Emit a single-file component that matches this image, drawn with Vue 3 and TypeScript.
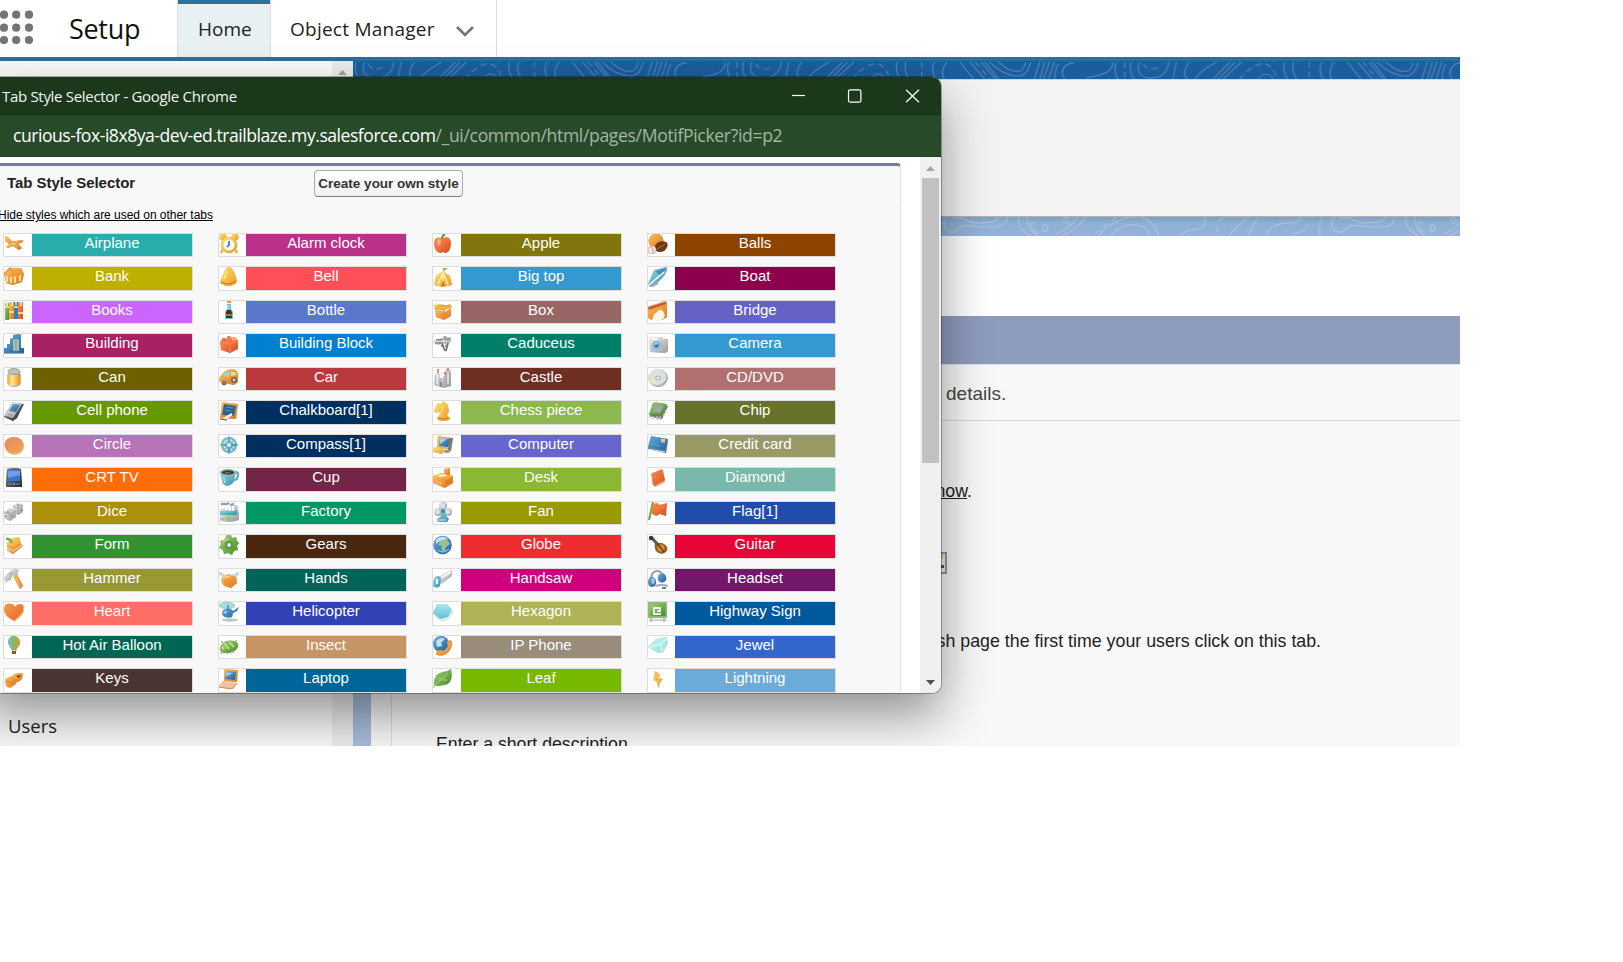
<script setup lang="ts">
type Shape = [d: string, fill: string, stroke?: string, width?: number]
interface Style { name: string; color: string; icon: Shape[] }

const e = (x: number, y: number, rx: number, ry = rx): string =>
  `M${x - rx} ${y}a${rx} ${ry} 0 1 0 ${rx * 2} 0a${rx} ${ry} 0 1 0 ${-rx * 2} 0z`
const r = (x: number, y: number, w: number, h: number): string => `M${x} ${y}h${w}v${h}h${-w}z`

const O = 'url(#g-orange)'
const Y = 'url(#g-yellow)'
const B = 'url(#g-blue)'
const A = 'url(#g-aqua)'
const G = 'url(#g-grey)'
const N = 'url(#g-green)'
const R = 'url(#g-red)'
const K = 'url(#g-dark)'
const none = 'none'

const styles: Style[] = [
  { name: 'Airplane', color: '#2aacac', icon: [['M1 2L4 3 8 7 12 7 17 6Q20 6 19 8L14 10 18 14 15 16 9 12 4 14 2 13 5 10 1 7z', O], ['M3 12L14 8M8 9L14 13', none, '#f9cb85', 1]] },
  { name: 'Alarm clock', color: '#b93189', icon: [[e(4, 3, 3.5), Y], [e(16, 3, 3.5), Y], ['M4 15L2 19M16 15L18 19', none, '#e9b04c', 2], [e(10, 11, 8.3), Y], [e(10, 11, 5.6), '#f5f7f3'], ['M10 7V11L8 13', none, '#2a62a5', 1.5]] },
  { name: 'Apple', color: '#82750e', icon: [['M10 4Q18 1 18 10Q17 19 12 19L10 18 8 19Q2 19 1 10Q1 2 8 4z', R], ['M9 5Q9 1 12 0', none, '#65a33a', 2], [e(6, 8, 2, 3), '#ffb083']] },
  { name: 'Balls', color: '#8d4400', icon: [[e(8, 7, 7.5), O], ['M6 14Q9 5 18 8Q22 11 16 17Q9 20 6 14z', '#6d390f'], ['M9 15L17 10', none, '#b87537', 1], [e(4, 16, 4), '#f5ece6', '#c7aaa0', .6], ['M3 13Q6 15 5 19', none, '#dd543c', .7]] },
  { name: 'Bank', color: '#bfaf00', icon: [['M0 7L6 1 17 1 20 7 18 15 9 18 2 16z', O], ['M3 9V15M7 10V16M11 9V16M16 7V14', none, '#ffe29c', 2], ['M0 7L6 1L10 9L20 7', none, '#e39a45', 1.5]] },
  { name: 'Bell', color: '#ff505a', icon: [['M10 0Q14 1 16 7L18 14Q17 19 8 19Q1 18 1 14L5 6Q6 1 10 0z', Y], ['M2 15Q9 19 17 14', none, '#d4811f', 1.2], ['M8 4L5 12', none, '#ffe88b', 2]] },
  { name: 'Big top', color: '#3399cf', icon: [['M10 4L17 9 19 18 10 20 1 18 3 9z', Y], ['M10 4V20M10 5L5 18M10 5L15 18', none, '#fff0a0', 1.5], ['M10 5V1H15L12 3z', '#c99768'], ['M8 20L10 13L12 19z', '#bf7c2b']] },
  { name: 'Boat', color: '#8c004c', icon: [['M0 17L6 3 19 0Q20 7 8 17L2 20z', A], ['M7 4L18 1 13 9z', B], ['M1 18L16 5', none, '#fff', 1.5], ['M2 20L10 16', none, '#a4abb0', 2]] },
  { name: 'Books', color: '#ca65ff', icon: [[r(1, 2, 4, 17), N], [r(5, 1, 5, 17), O], [r(10, 1, 4, 17), '#327cca'], [r(14, 1, 5, 17), R], ['M1 6H5M5 11H10M10 6H14M14 12H19', none, '#ffdc61', 2], ['M3 0V5M8 0V5M12 0V4M17 0V5', none, '#fff', 1.3]] },
  { name: 'Bottle', color: '#5a78cb', icon: [[r(8, 0, 4, 2), O], ['M8 3H12V8L14 11V18H6V11L8 8z', '#72c6ca'], ['M8 9H12L13 12V17H7V12z', '#49311d'], [r(7, 13, 6, 2), '#8a8048'], ['M9 4V8', none, '#d6f2ee', 1]] },
  { name: 'Box', color: '#996666', icon: [['M2 8L12 11 18 7V15L11 19 3 16z', O], ['M2 7L0 4 9 3 11 5 17 3 19 6 12 9z', Y], ['M2 7L11 9V18M4 5H16', none, '#e08a25', 1]] },
  { name: 'Bridge', color: '#6463c5', icon: [['M0 7L19 1V16L14 19Q14 7 6 13L4 19 0 17z', O], ['M0 6L18 0V3L1 9z', '#c75b31'], ['M6 18Q9 7 14 9Q19 15 15 18L9 20z', '#fff8e8'], ['M2 5L18 0', none, '#efc6aa', 1]] },
  { name: 'Building', color: '#a82162', icon: [['M0 14H3V10H6V5L9 4V1L15 0 17 1V14H20V19H0z', B], ['M9 5H15V17H9z', '#87abc0'], ['M10 6V16M14 6V16', none, '#f0ce64', 1], ['M0 19H20', none, '#477c98', 1]] },
  { name: 'Building Block', color: '#0080ce', icon: [['M1 7L12 4 19 6V15L11 19 2 16z', R], [e(5, 6, 2.5, 2), '#f06b43'], [e(10, 4, 2.5, 2), '#f47d4e'], [e(15, 5, 2.5, 2), '#f9a26c'], ['M2 8L11 10V18M11 10L19 7', none, '#fb8a68', .8]] },
  { name: 'Caduceus', color: '#007f68', icon: [['M0 7Q7 4 18 3Q19 8 14 11L13 17 10 14 9 10Q3 12 1 9z', G], ['M3 6L17 5M2 9H15M8 12H14', none, '#606061', 1.2], ['M10 5L13 18M14 8L10 14', none, '#f7f7f7', 1], ['M9 10L12 17M15 9L13 17', none, '#717171', 1.5], [e(12, 4, 2), '#a6a6a6']] },
  { name: 'Camera', color: '#3399cf', icon: [['M3 3H14L15 5H20V17L17 19 2 18 1 7z', G], [e(9, 12, 5.5), '#b5bbc2'], [e(8.5, 11.5, 3.7), '#76b9e4'], [e(8.5, 11.5, 1.8), '#2666a9'], [e(8, 10, 1), '#cceeff'], ['M4 5H10', none, '#fff', 1.5]] },
  { name: 'Can', color: '#6d6000', icon: [[r(4, 2, 12, 5), G], ['M4 15Q10 19 16 15V17Q10 21 4 17z', G], ['M3.5 6Q10 9 16.500 6V16Q10 19 3.500 16z', 'url(#g-can)'], [e(10, 3.5, 6, 3), '#bfc0c0', '#8b8b8b', .6]] },
  { name: 'Car', color: '#b9393c', icon: [['M1 9L5 4Q10 0 17 2L19 6V14L15 17 4 15 0 13z', O], ['M4 8L7 4L11 4L10 9z', '#9dd2df'], ['M12 4H16L18 7 12 8z', '#e6dca9'], [e(5, 15, 2.5), '#8c7862'], [e(15, 12, 3), '#686663'], [e(15, 12, 1.4), '#ccc']] },
  { name: 'Castle', color: '#6d2f22', icon: [['M2 5H7V10H10V8H12V3L14 0 18 3V18L11 20 1 17z', G], ['M3 7V17M7 10V19M13 5V18M17 5V17', none, '#9d9d9d', .8], ['M5 1V5M15 0V3M12 4V7', none, '#d36c57', 1.3], ['M8 14V19', none, '#777', 1.3], ['M4 7V16M15 6V16', none, '#fff', 1]] },
  { name: 'CD/DVD', color: '#b0706f', icon: [[e(10, 10, 9.8, 9), G], [e(9.5, 9.5, 8.5, 7.5), '#dfe1df'], ['M10 10L2 6 1 9z', '#dbe5ab'], ['M10 10L2 13 4 16z', '#eeedb9'], ['M10 10L18 7 18 12z', '#cde6df'], [e(10, 10, 3, 2.5), '#b6c2b5'], [e(10, 10, 1.3, 1), '#fff']] },
  { name: 'Cell phone', color: '#669900', icon: [['M8 2L20 3 13 17 9 20 0 16z', K], ['M8 1L18 3 9 17 1 15z', G], ['M9 3L16 4 12 11 5 10z', B], ['M4 13L9 15M3 15L8 17', none, '#8a9198', 1]] },
  { name: 'Chalkboard[1]', color: '#003060', icon: [['M3 1L19 3 17 18 1 17z', O], ['M5 3L17 5 15 15 3 14z', '#2e6292'], ['M7 6L14 7M6 9L12 10', none, '#7ba4bf', .7], ['M5 18L13 13', none, '#f9f7f1', 2.2], ['M1 18L8 19', none, '#774a2a', 1]] },
  { name: 'Chess piece', color: '#8db84f', icon: [['M5 2L8 3 10 0 15 4 16 11 14 14 17 17Q17 20 10 20Q4 20 4 17L8 13 7 11 2 12 1 9z', Y], ['M7 4L10 8L7 14', none, '#ffce6b', 2], ['M5 17Q9 19 15 17', none, '#c9771f', 1]] },
  { name: 'Chip', color: '#69722a', icon: [['M5 2L20 5 14 18 1 15z', '#6c776a'], ['M6 1L19 3 14 14 1 13z', N], ['M8 4L15 5 12 12 5 11z', '#9fa69f'], ['M2 14V17M5 15V18M9 15V19M12 15V19M15 13L16 15M17 9L18 11', none, '#d1cabe', 1.2]] },
  { name: 'Circle', color: '#b772b8', icon: [[e(10.5, 11.5, 9.3, 8.2), '#e9b763'], [e(10, 9.8, 9.5, 7.9), 'url(#g-disc)']] },
  { name: 'Compass[1]', color: '#003060', icon: [[e(10, 10, 7), none, '#76bac2', 2], ['M10 0L12 7 17 3 13 8 20 10 13 12 17 17 12 13 10 20 8 13 3 17 7 12 0 10 7 8 3 3 8 7z', A], ['M10 2V10H18M10 10V18M10 10H2', none, '#4d8fa8', .8], [e(10, 10, 2), '#d7f2ed']] },
  { name: 'Computer', color: '#6666cc', icon: [['M5 1L19 3 17 15 4 13z', '#efb45a'], ['M16 3L20 3 18 16 15 15z', '#80796c'], ['M7 3L17 4 15 12 6 11z', B], ['M13 15L18 16 15 18 10 17z', '#8b9189'], ['M1 12L12 15 9 19 0 17z', Y], ['M7 3L14 4 7 9z', '#9fd3ee']] },
  { name: 'Credit card', color: '#999966', icon: [['M3 3L20 6 18 18 0 14z', '#5d7c98'], ['M3 1L20 4 17 15 0 12z', B], [r(13, 4, 4, 3.5), '#e9c969'], ['M3 9L12 11', none, '#73add3', .8], ['M1 14L17 17', none, '#c8dae6', 1]] },
  { name: 'CRT TV', color: '#ff6d08', icon: [['M3 1Q10-1 17 1L18 15V19H2V15z', K], [r(4, 2, 12, 11), '#3a76d0'], ['M4 3H16V7L4 10z', '#6f9fe5'], ['M4 16H8M12 16H16', none, '#888', 1], [e(10, 16, 1), '#7ab4db']] },
  { name: 'Cup', color: '#722546', icon: [['M15 5Q21 2 18 11L13 13', none, '#58afc0', 2], ['M1 4Q8 7 17 4L14 15Q9 20 4 16z', A], [e(9, 4.5, 8, 3.5), '#78c4d1'], [e(9, 4.5, 6.2, 2.2), '#4f351e'], ['M6 5L11 5', none, '#b99a6b', .8], ['M4.500 9L6 15', none, '#a9dce4', 1.5]] },
  { name: 'Desk', color: '#8ab833', icon: [['M0 8L9 5 20 8V15L12 20 0 15z', O], ['M0 8L10 11 20 8L10 5z', Y], ['M2 12L9 14V17L2 15z', '#f5b061'], ['M11 7V1L17 0V7z', O], ['M12 13L19 10V14L12 18z', '#dc7e2c'], ['M6 8L13 7', none, '#fff', 1.5]] },
  { name: 'Diamond', color: '#79b8ab', icon: [['M4 5L15 2 17 14 7 19 4 16z', '#e8b068'], ['M3 6L14 1 17 12 6 18z', R]] },
  { name: 'Dice', color: '#ab910b', icon: [['M9 4L14 1 19 3V10L14 13 9 10z', G], ['M0 10L6 6 12 9V15L6 19 0 16z', G], ['M9 4L14 6L19 3M0 10L6 12L12 9M6 12V18M14 6V13', none, '#a69d8d', .8], [e(4, 10, .8), '#6a5d4d'], [e(8, 14, .8), '#6a5d4d'], [e(14, 3, .8), '#6a5d4d'], [e(17, 8, .8), '#6a5d4d'], [e(2, 14, .7), '#6a5d4d']] },
  { name: 'Factory', color: '#009966', icon: [['M1 8L6 6V9L11 7V3H18L20 12V18L12 20 1 19z', G], ['M1 9L18 8V13H1z', A], [r(8, 14, 3, 5), '#9fc54b'], ['M2 2H8L10 1M11 3L15 2', none, '#969b9d', 2], ['M11 4V9M14 4V9', none, '#fff', 2], ['M1 17H7M13 17H20', none, '#9ba9ab', 1]] },
  { name: 'Fan', color: '#999900', icon: [[e(10, 4, 4), G], [e(5, 10, 4), G], [e(15, 10, 4), G], [e(10, 4, 2.3), '#d3e6e9'], [e(5, 10, 2), '#d8e6e7'], [e(15, 10, 2), '#d8e6e7'], ['M8 7H12L13 14 16 17 14 20H5L4 17 8 14z', A], [e(10, 9, 2), '#4a8aa5'], ['M6 18H13', none, '#c9e9f1', 1]] },
  { name: 'Flag[1]', color: '#204da9', icon: [['M5 0L1 18', none, '#6fad4b', 2], ['M5 2L9 1 12 3 19 1 18 14 12 12 8 14 3 11z', R], ['M8 3L11 6L16 5', none, '#f47a3b', 1.5]] },
  { name: 'Form', color: '#319431', icon: [['M3 9L13 4 19 11 9 19 3 15z', O], ['M5 4L15 2 17 8 9 12 3 9z', Y], ['M3 13L9 16L18 10', none, '#ffe9bd', 1], ['M2 4Q6 3 8 8', none, '#72a850', 2]] },
  { name: 'Gears', color: '#4a2810', icon: [['M8 0H12L13 3 17 2 18 6 20 8 18 11 19 15 15 16 13 20 9 18 5 19 4 15 0 13 2 9 1 6 5 5z', N], [e(10, 10, 4), '#5d924a'], [e(10, 10, 2), '#e2eddc'], ['M4 8Q6 4 10 4', none, '#aed387', 1.3]] },
  { name: 'Globe', color: '#ef2d30', icon: [[e(9.5, 10, 9.2), B], ['M8 4L14 4 17 9 13 12 11 17 8 14 9 11 5 10z', '#98c28b'], ['M3 5Q9-1 15 4Q8 4 3 9z', '#c5e6f5'], ['M5 15Q10 19 16 14', none, '#84baf0', 1.5]] },
  { name: 'Guitar', color: '#e70437', icon: [['M4 3L10 10', none, '#615d55', 3], [e(3, 3, 2.2), '#363636'], ['M7 9L11 8 14 8Q22 12 18 17Q13 21 8 16Q6 12 7 9z', '#9e5d16'], [e(13, 13, 3.500), '#cf963b'], ['M9 8L16 17', none, '#4f4028', 1.3]] },
  { name: 'Hammer', color: '#999933', icon: [['M9 7L13 5 19 17 16 20z', O], ['M4 4L10 0 15 1 12 7 8 6 6 11 2 13 0 9z', G], ['M5 5L8 4 6 11', none, '#a9b3b6', 1.2], ['M12 9L17 18', none, '#ffc67c', 1]] },
  { name: 'Hands', color: '#006558', icon: [['M0 4L5 7 3 12M20 4L15 7 17 11', none, '#b9dfe1', 3], ['M4 8L9 5 17 8 18 14 12 19 5 17 2 12z', O], ['M5 12L11 16M8 10L14 15', none, '#cd762c', .8], ['M4 9L11 7', none, '#ffd188', 1.5]] },
  { name: 'Handsaw', color: '#ce007b', icon: [['M6 8L19 1 19 7 8 15z', G], ['M8 9L18 3', none, '#f7faf9', 2], ['M1 9Q6 5 8 9L7 17Q3 20 0 17z', A], ['M4 10L4 15', none, '#eefbfa', 2]] },
  { name: 'Headset', color: '#73176b', icon: [['M3 12Q3 1 10 2Q16 4 16 11', none, '#9ca7ad', 2], [e(4, 13, 4, 5), B], [e(14, 9, 4.3, 4.5), B], [e(5, 12, 1.8, 3), '#a3c7da'], ['M7 17Q14 15 20 17', none, '#a4b2bc', 1.8], ['M14 19H18', none, '#326d9f', 1.5]] },
  { name: 'Heart', color: '#ff6e66', icon: [['M10 19Q0 14 0 7Q1 0 8 2Q10 2 11 5Q14 0 19 3Q22 9 10 19z', 'url(#g-heart)'], ['M10 19Q18 13 20 8', none, '#e2b35b', 1.3]] },
  { name: 'Helicopter', color: '#3142b5', icon: [['M4 8L11 6 14 9 20 5 18 9 14 11 13 15Q5 17 3 12z', B], [e(8, 3.5, 7.5, 3), '#a5dfe0', '#8accd2', .8], ['M9 3V8', none, '#3b6382', 1], ['M4 10L8 9 7 12z', '#afdeef'], [e(11, 18, 8, 1.5), '#bec5c7']] },
  { name: 'Hexagon', color: '#b0b257', icon: [['M5 3L15 3 20 11 15 18 8 19 0 13z', '#e5ede8'], ['M4 2L14 2 19 8 15 15 7 17 0 11z', 'url(#g-hex)']] },
  { name: 'Highway Sign', color: '#00599c', icon: [['M3 16V20M16 16V20', none, '#b8bfb8', 2], [r(0, 0, 19, 16), '#8fba7c'], [r(1.5, 1.5, 16, 12.5), N], ['M13 12H6V6H12V9H9', none, '#eff7e9', 1.8], ['M1 18H19', none, '#c4c4c4', 1]] },
  { name: 'Hot Air Balloon', color: '#006654', icon: [['M4 6Q5 0 10 0Q17 1 16 8L12 14H8z', O], ['M7 1Q10-1 13 1L14 9 11 14H8L6 9z', '#8cb85c'], ['M9 0Q6 6 9 13H7L4 7Q4 1 9 0z', '#79bac4'], ['M8 14L9 17M12 14L11 17', none, '#a06438', .8], [r(8, 15, 4, 3), '#835733']] },
  { name: 'Insect', color: '#c69566', icon: [['M1 11Q5 3 15 5Q20 6 19 11Q16 17 7 17Q0 17 1 11z', N], ['M3 16L2 18M8 17L9 18M13 15L15 17M4 7L2 5M16 6L18 4', none, '#92ac72', 1], ['M5 7L10 13M10 6L15 11', none, '#bfdc83', 2], [e(4, 12, 1.7), '#c4dc7a']] },
  { name: 'IP Phone', color: '#998c7b', icon: [[e(8, 8, 8), B], ['M3 5Q8 0 12 3L8 7 9 10 4 11z', '#c4e1e7'], ['M14 6Q16 3 19 5Q20 13 13 18Q9 21 4 19Q2 18 4 15L8 14 11 15 15 11z', O], ['M7 17Q15 15 17 7', none, '#f6a04b', 1.5]] },
  { name: 'Jewel', color: '#3366cc', icon: [['M0 11L8 3 18 1 20 7 15 16 10 17z', 'url(#g-jewel)'], ['M2 11L13 8L18 3M13 8L14 15', none, '#dcfaf5', 1.3]] },
  { name: 'Keys', color: '#4a3431', icon: [['M8 7Q10 4 18 4Q20 7 17 11Q13 15 9 12z', O], ['M12 7L17 6 15 9z', '#6c4b25'], ['M1 10L8 7 13 10 12 15 6 19 2 17z', O], ['M2 12L7 14L12 11', none, '#c98525', 1]] },
  { name: 'Laptop', color: '#006699', icon: [['M5 0L19 1 18 13 5 12z', O], ['M7 2L17 3 16 11 6 10z', B], ['M4 12L17 14 13 20 0 17z', '#f0c39d'], ['M0 18L13 20L18 14', none, '#df8646', 1], ['M7 3L14 4L7 8z', '#96c6e6']] },
  { name: 'Leaf', color: '#77b800', icon: [['M1 15Q0 5 10 3Q14 3 18 0Q21 15 11 16Q6 17 2 17z', N], ['M0 19Q4 14 15 4M7 12L7 8M9 11L14 11', none, '#b5d67a', 1]] },
  { name: 'Lightning', color: '#6aabd9', icon: [['M7 2L12 5 11 9 15 10 12 14 10 19 9 13 5 11z', Y], ['M8 3L8 10L12 12', none, '#f3ab40', 1]] }
]

const dots: string[] = [14.7, 27.7, 40].flatMap(y => [4, 16.2, 29].map(x => e(x, y, 4.1)))

const contourDark = {
  solid: 'M40 0Q28 25 45 52M75 0Q55 30 68 52M112 0L150 52M140 0L182 52M172 0L212 52M182 0L220 52M195 0Q235 42 275 42Q300 42 310 0M220 0Q250 30 275 28Q290 28 296 0M335 0L320 52M350 0L335 52M363 0L345 52M376 0L360 52M432 2Q400 5 398 35L405 52M388 5Q375 30 378 52M540 0Q540 30 500 40Q465 45 465 52M550 0Q540 30 555 52M590 0Q585 30 600 52M615 0Q600 40 640 48Q690 52 697 0M718 0L708 52M755 0Q730 35 750 52M830 0Q780 30 770 52M868 0L820 52M882 0L835 52M900 0L848 52M1020 0Q1015 30 1030 52M1045 0Q1040 30 1055 52M945 52Q970 20 990 52',
  dashed: 'M155 0L195 50M573 0V52M625 5Q640 35 675 10M895 52Q930 5 965 5Q990 10 1000 52M5 0V52'
}
const contourLight = {
  solid: 'M75 0C55 30 80 50 100 44C115 25 120 22 160 28C220 35 240 30 245 0M90 5C130-5 130 22 170 18C205 15 215 15 218 0M275 0Q275 40 310 55M300 0Q300 40 330 55M325 15L310 18Q315 45 330 45M343 33a7 10 0 1 0 14 0a7 10 0 1 0-14 0M402 10a7 9 0 1 0 14 0a7 9 0 1 0-14 0M465 0Q430 45 400 55M440 0Q420 35 380 52M535 55Q570 15 610 25Q645 35 640 55M500 55C550 0 590-5 620 0Q660 15 668 55M730 55Q750 35 785 35Q800 25 798 0M920 0Q870 45 865 55M945 0Q930 35 920 55M970 55Q985 15 1040 18Q1065 15 1065 0M1040 50Q1080 48 1085 20M40 0Q30 30 35 55',
  dashed: 'M490 50L550 0M850 0Q820 30 840 55'
}
</script>

<template>
  <svg class="defs" width="0" height="0" aria-hidden="true">
    <defs>
      <linearGradient id="g-orange" x2="1" y2="1"><stop stop-color="#ffc15a" /><stop offset="1" stop-color="#df7420" /></linearGradient>
      <linearGradient id="g-yellow" x2="1" y2="1"><stop stop-color="#ffe272" /><stop offset="1" stop-color="#ea9b27" /></linearGradient>
      <linearGradient id="g-can"><stop stop-color="#f0a52c" /><stop offset=".35" stop-color="#ffec8c" /><stop offset="1" stop-color="#e48a1c" /></linearGradient>
      <linearGradient id="g-heart" x2="1" y2="1"><stop stop-color="#f4a04c" /><stop offset="1" stop-color="#ec5f1e" /></linearGradient>
      <linearGradient id="g-blue" x2="1" y2="1"><stop stop-color="#68afdb" /><stop offset="1" stop-color="#1f5f9f" /></linearGradient>
      <linearGradient id="g-aqua" x2="1" y2="1"><stop stop-color="#9bdae3" /><stop offset="1" stop-color="#348fae" /></linearGradient>
      <linearGradient id="g-grey" x2="1" y2="1"><stop stop-color="#f3f3f3" /><stop offset="1" stop-color="#96999b" /></linearGradient>
      <linearGradient id="g-green" x2="1" y2="1"><stop stop-color="#a5cf70" /><stop offset="1" stop-color="#438e2b" /></linearGradient>
      <linearGradient id="g-red" x2="1" y2="1"><stop stop-color="#ff9350" /><stop offset="1" stop-color="#d84c22" /></linearGradient>
      <linearGradient id="g-dark" x2="1" y2="1"><stop stop-color="#7a858e" /><stop offset="1" stop-color="#282d32" /></linearGradient>
      <linearGradient id="g-disc" x2="1" y2="1"><stop stop-color="#e68b58" /><stop offset="1" stop-color="#f2a05c" /></linearGradient>
      <linearGradient id="g-hex" x2="0" y2="1"><stop stop-color="#a7eaea" /><stop offset="1" stop-color="#5cbfd2" /></linearGradient>
      <linearGradient id="g-jewel" x2="1" y2="1"><stop stop-color="#c6f4ea" /><stop offset="1" stop-color="#93e4dc" /></linearGradient>
      <pattern id="contour-dark" width="1085" height="54" patternUnits="userSpaceOnUse" patternTransform="translate(179.5 1) scale(.35714 .33333)">
        <path :d="contourDark.solid" /><path :d="contourDark.dashed" stroke-dasharray="18 12" />
      </pattern>
      <pattern id="contour-light" width="1085" height="60" patternUnits="userSpaceOnUse" patternTransform="translate(179.5 0) scale(.35714 .33333)">
        <path :d="contourLight.solid" /><path :d="contourLight.dashed" stroke-dasharray="18 12" />
      </pattern>
    </defs>
  </svg>

  <div class="screen">
    <header class="top">
      <svg class="waffle" width="34" height="57"><path v-for="d in dots" :key="d" :d="d" /></svg>
      <div class="app-name"><span>Setup</span></div>
      <nav class="tabs">
        <a class="tab active"><span>Home</span></a>
        <a class="tab manager">
          <span>Object Manager</span>
          <svg width="20" height="12" viewBox="0 0 20 12"><path d="M2 2L10 10 18 2" /></svg>
        </a>
      </nav>
    </header>

    <div class="below">
      <aside class="side">
        <div class="side-body"><span>Users</span></div>
        <div class="side-scroll"><i class="arrow up"></i></div>
      </aside>
      <main class="main">
        <svg class="band dark" width="1107" height="18"><rect width="1107" height="18" fill="url(#contour-dark)" /></svg>
        <div class="card"></div>
        <svg class="band light" width="1107" height="19"><rect width="1107" height="19" fill="url(#contour-light)" /></svg>
        <div class="body">
          <section class="sheet">
            <div class="bar"></div>
            <div class="details"><span>details.</span></div>
            <div class="form">
              <p class="now"><u>now</u>.</p>
              <svg class="lookup" width="16" height="22" viewBox="0 0 16 22"><path d="M0 1H14V21H0" fill="#eee" stroke="#999" stroke-width="2" /><path d="M0 2H11V7H0z" fill="#e9be61" /><path d="M9 13H12V16H9z" fill="#555" /></svg>
              <p class="splash">splash page the first time your users click on this tab.</p>
              <p class="enter">Enter a short description</p>
            </div>
          </section>
        </div>
      </main>
    </div>

    <div class="window">
      <div class="titlebar">
        <span class="caption">Tab Style Selector - Google Chrome</span>
        <svg width="128" height="14" viewBox="0 0 128 14"><path d="M0 6.5H13" /><rect x="56.5" y=".8" width="12.4" height="12.4" rx="1.8" /><path d="M114 .7L127 13.3M127 .7L114 13.3" /></svg>
      </div>
      <div class="urlbar"><span class="host">curious-fox-i8x8ya-dev-ed.trailblaze.my.salesforce.com</span><span class="path">/_ui/common/html/pages/MotifPicker?id=p2</span></div>
      <div class="view">
        <div class="panel">
          <div class="panel-head">
            <h1>Tab Style Selector</h1>
            <button type="button">Create your own style</button>
          </div>
          <a class="hide">Hide styles which are used on other tabs</a>
          <div class="grid">
            <div v-for="s in styles" :key="s.name" class="cell">
              <svg class="icon" width="20" height="20" viewBox="0 0 20 20">
                <path v-for="(p, i) in s.icon" :key="i" :d="p[0]" :fill="p[1]" :stroke="p[2]" :stroke-width="p[3]" />
              </svg>
              <span class="label" :style="{ backgroundColor: s.color }">{{ s.name }}</span>
            </div>
          </div>
        </div>
        <div class="scroll"><i class="arrow up"></i><div class="thumb"></div><i class="arrow down"></i></div>
      </div>
    </div>
  </div>
</template>

<style>
body { background: #fff; }
</style>

<style scoped>
* { box-sizing: border-box; }
.defs { position: absolute; }
.defs pattern path { fill: none; stroke: #fff; stroke-opacity: .22; stroke-width: 3.5; }
.screen { position: relative; width: 1460px; height: 746px; overflow: hidden; background: #fff; font-family: "Liberation Sans", Arial, sans-serif; color: #222; white-space: nowrap; }
.top { display: flex; height: 61px; border-bottom: 4px solid #28729e; font-family: "Open Sans", sans-serif; }
.waffle { fill: #747474; flex: none; }
.app-name { width: 143px; padding-left: 35px; font-size: 27px; line-height: 58px; letter-spacing: -.3px; color: #111; }
.tabs { display: flex; font-size: 19px; line-height: 57px; }
.tab { display: flex; align-items: center; height: 57px; }
.tab span { padding-top: 2px; }
.active { width: 94px; padding-left: 20px; background: #e8f0f4; border: 1px solid #dcdfe2; border-width: 0 1px; box-shadow: inset 0 4px #28729e; }
.manager { width: 226px; padding-left: 19px; border-right: 1px solid #ddd; letter-spacing: .25px; }
.manager svg { margin-left: 20px; margin-top: 4px; fill: none; stroke: #747474; stroke-width: 2.6; }
.below { display: flex; height: 685px; }
.side { display: flex; width: 353px; background: #fafafa; }
.side-body { display: flex; align-items: flex-end; width: 332px; padding: 0 0 6px 8px; font: 18.5px/28px "Open Sans", sans-serif; }
.side-scroll { width: 21px; background: #ededed; padding: 9px 0 0 6px; }
.arrow { display: block; width: 9px; height: 5px; background: #a3a3a3; clip-path: polygon(50% 0, 100% 100%, 0 100%); }
.arrow.down { background: #505050; clip-path: polygon(0 0, 100% 0, 50% 100%); }
.main { width: 1107px; }
.band { display: block; }
.dark { background: #1b5e9f; }
.light { background: linear-gradient(#7f9fc4, #8fafd4 35%, #95b3d7); }
.card { height: 138px; background: #f3f3f3; border-top: 1px solid #d5d5d8; border-bottom: 1px solid #b5b3b2; }
.body { height: 510px; padding-left: 18px; background: #a8bddb; }
.sheet { height: 510px; padding: 80px 0 0 20px; background: linear-gradient(#fff 80px, #f8f8f8 80px); }
.bar { height: 48px; background: #8e9cbe; }
.details { height: 57px; padding-left: 554px; border-left: 1px solid #ddd; border-top: 1px solid #e3e3e3; border-bottom: 1px solid #d8d8d8; font-size: 19px; line-height: 58px; color: #444; background: #f8f8f8; }
.form { height: 325px; border-left: 1px solid #ddd; padding-top: 60px; font-size: 17.8px; line-height: 20px; }
.form p { margin: 0; }
.now { width: 580px; text-align: right; }
.lookup { display: block; margin: 51px 0 0 540px; }
.form .splash { margin: 57px 0 0 512px; }
.form .enter { margin: 83px 0 0 44px; font-size: 17.7px; }

.window { position: absolute; left: -20px; top: 77px; width: 961px; height: 616px; border-radius: 9px; background: #fff; box-shadow: 0 0 0 1px rgba(0, 0, 0, .3), 0 22px 50px rgba(0, 0, 0, .42); }
.titlebar { display: flex; align-items: center; justify-content: space-between; height: 38px; padding: 0 21px 0 22px; border-radius: 9px 9px 0 0; background: #1b381b; color: #f2f5f2; font: 15px/36px "Open Sans", sans-serif; letter-spacing: -.31px; }
.titlebar svg { fill: none; stroke: #fff; stroke-width: 1.2; }
.urlbar { height: 42px; padding-left: 33px; border-top: 1px solid #20451f; border-bottom: 1px solid #1f431f; background: #274a29; font: 17.6px/39px "Open Sans", sans-serif; }
.host { color: #fff; letter-spacing: -.48px; }
.path { color: #a3b5a3; letter-spacing: -.35px; }
.view { display: flex; height: 536px; padding-top: 6px; border-radius: 0 0 9px 9px; overflow: hidden; }
.panel { width: 921px; margin-right: 19px; padding-left: 20px; height: 540px; background: #f8f8f8; border-top: 3px solid #747e96; border-right: 1px solid #e2e2e2; border-radius: 0 4px 0 0; flex: none; }
.panel-head { display: flex; height: 36px; border-bottom: 1px solid #fff; }
h1 { width: 307px; margin: -1px 0 0; padding-left: 7px; font-size: 15px; line-height: 16px; letter-spacing: -.05px; color: #222; align-self: center; }
button { width: 149px; height: 27px; margin: 4px 0 0 7px; padding: 0; border: 1px solid #aaa; border-bottom-color: #7f7f7f; border-radius: 4px; background: linear-gradient(#fff, #f0f0f0); color: #333; font: bold 13.5px/24px "Liberation Sans", Arial, sans-serif; }
.hide { display: block; height: 31px; margin-left: -2px; padding-top: 6px; font-size: 12px; line-height: 14px; letter-spacing: -.03px; color: #000; text-decoration: underline; }
.grid { display: grid; grid-template-columns: 190px 189px 190px 189px; grid-auto-rows: 24px 25px; gap: 9px 25px; margin-left: 3px; }
.cell { display: flex; justify-content: space-between; border: 1px solid #ddd; background: #fff; }
.icon { display: block; filter: drop-shadow(.5px .7px .5px rgba(0, 0, 0, .25)); }
.label { width: 160px; color: #fff; font-size: 15px; line-height: 17px; text-align: center; }
.scroll { width: 21px; height: 536px; margin-top: -6px; padding: 9px 0 0 6px; background: #f0f0f0; flex: none; }
.thumb { width: 17px; height: 285px; margin: 7px 0 217px -4px; background: #c1c1c1; }
</style>
